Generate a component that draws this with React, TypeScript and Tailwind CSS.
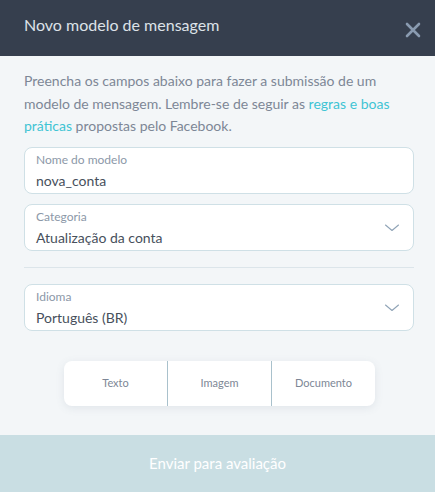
import React from 'react';

const font = { fontFamily: 'Lato, "Noto Sans", sans-serif' };

const Chevron: React.FC = () => (
    <svg width="16" height="8" viewBox="0 0 16 8" className="shrink-0 mt-[2px]">
        <path d="M1.5 1 L8 6.5 L14.5 1" fill="none" stroke="#8fa3b6" strokeWidth="1.1" strokeLinecap="round" strokeLinejoin="round" />
    </svg>
);

const Field: React.FC<{ label: string; value: string; select?: boolean }> = ({ label, value, select }) => (
    <div className="h-[47px] rounded-lg border border-[#cfe0e6] bg-white flex items-center pl-[11px] pr-[13px]">
        <div className="flex-1 flex flex-col self-start pt-[5px]">
            <span className="text-[12px] leading-[14px] text-[#8c98a8]">{label}</span>
            <span className="text-[14px] leading-[20px] mt-[4px] text-[#47505c]">{value}</span>
        </div>
        {select && <Chevron />}
    </div>
);

const App: React.FC = () => {
    const types = ['Texto', 'Imagem', 'Documento'];

    return (
        <div className="w-[435px] h-[492px] bg-[#f3f6f8] flex flex-col" style={font}>
            {/* Header */}
            <div className="h-[56px] bg-[#363f4e] flex items-center justify-between pl-6 pr-[14px] shrink-0">
                <h1 className="text-[16px] text-[#dde2e8] -mt-[7px]">Novo modelo de mensagem</h1>
                <svg width="16" height="16" viewBox="0 0 16 16" className="mt-[3px]">
                    <path d="M2 2 L14 14 M14 2 L2 14" stroke="#8a9bb0" strokeWidth="2.6" strokeLinecap="round" />
                </svg>
            </div>

            {/* Body */}
            <div className="flex-1 pl-6 pr-[21px] pt-[14px]">
                <p className="text-[14px] leading-[22.5px] text-[#7d8796]">
                    Preencha os campos abaixo para fazer a submissão de um modelo de mensagem. Lembre-se de seguir as{' '}
                    <span className="text-[#3fc4d4]">regras e boas práticas</span> propostas pelo Facebook.
                </p>

                <div className="mt-[9px] flex flex-col gap-[10px]">
                    <Field label="Nome do modelo" value="nova_conta" />
                    <Field label="Categoria" value="Atualização da conta" select />
                </div>

                <div className="mt-[16px] h-px bg-[#dce5ea]" />

                <div className="mt-[16px]">
                    <Field label="Idioma" value="Português (BR)" select />
                </div>

                <div className="mt-[30px] ml-[40px] w-[311px] h-[45px] bg-white rounded-lg shadow-[0_2px_8px_rgba(90,110,130,0.12)] flex">
                    {types.map((t, i) => (
                        <div
                            key={t}
                            className={`flex-1 flex items-center justify-center text-[11px] text-[#7d8796] ${i > 0 ? 'border-l border-[#a9c1cc]' : ''}`}
                        >
                            {t}
                        </div>
                    ))}
                </div>
            </div>

            {/* Footer button */}
            <button className="h-[57px] bg-[#c9dee3] text-white text-[15px] shrink-0">Enviar para avaliação</button>
        </div>
    );
};

export default App;
